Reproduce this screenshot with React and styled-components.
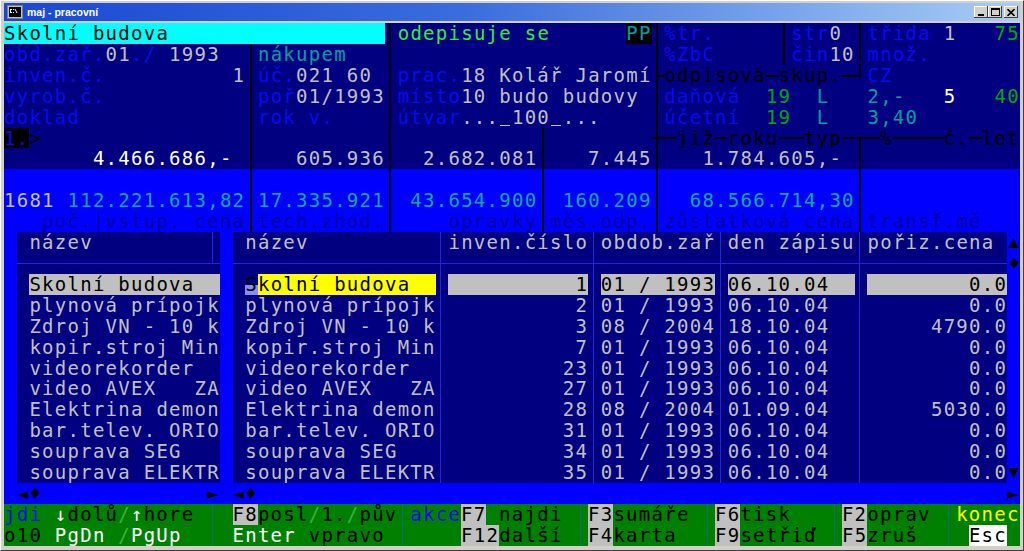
import React from 'react';
import styled, { createGlobalStyle } from 'styled-components';

const CW = 12.7;
const RH = 20.92;

const NV = '#000080';
const BB = '#0000FF';
const LB = '#0A0AF0';
const GY = '#C0C0C0';
const WH = '#FFFFFF';
const BK = '#000000';
const TL = '#00A0A0';
const TL2 = '#10A898';
const GN = '#00A800';
const BGN = '#33EE33';
const YL = '#FFFF00';
const CY = '#00FFFF';
const DL = '#0000A0';
const SEP = '#2424E0';
const BAR = '#008000';
const DIM = '#3FB03F';
const BSEP = '#0A6E82';
const HL = '#C0C0C0';
const CURSOR = `linear-gradient(to bottom, ${NV} 0 54%, #8C8CF0 54% 100%)`;

const GlobalStyle = createGlobalStyle`
  html, body { margin: 0; padding: 0; background: #D4D0C8; overflow: hidden; }
  #root { width: 1024px; height: 551px; }
`;

const Window = styled.div`
  width: 1024px;
  height: 551px;
  box-sizing: border-box;
  background: #D4D0C8;
  border-top: 1px solid #ffffff;
  border-left: 1px solid #ffffff;
  border-right: 1px solid #404040;
  border-bottom: 1px solid #404040;
  padding: 2px 3px 4px 3px;
  display: flex;
  flex-direction: column;
`;

const TitleBar = styled.div`
  height: 18px;
  margin-bottom: 2px;
  display: flex;
  align-items: center;
  gap: 4px;
  padding: 0 2px 0 3px;
  background: linear-gradient(to right, #1848D4 0%, #3A6CDC 45%, #A8CDF5 100%);
`;

const TitleText = styled.span`
  font-family: "Liberation Sans", Arial, sans-serif;
  font-weight: bold;
  font-size: 10.5px;
  color: #ffffff;
  flex: 1;
  white-space: nowrap;
`;

const TitleButtons = styled.div`
  display: flex;
  align-items: center;
`;

const TitleButton = styled.div`
  width: 14px;
  height: 12px;
  margin-left: ${p => (p.$gap ? '2px' : '0')};
  background: #D4D0C8;
  box-shadow: inset -1px -1px #404040, inset 1px 1px #ffffff;
  display: flex;
  align-items: center;
  justify-content: center;
`;

const Console = styled.div`
  width: ${80 * CW}px;
  height: ${25 * RH}px;
  display: grid;
  grid-template-rows: repeat(25, ${RH}px);
  background: ${NV};
  font-family: "DejaVu Sans Mono", "Liberation Mono", monospace;
  font-size: 19px;
  line-height: ${RH}px;
  letter-spacing: ${CW - 19 * 0.60205}px;
  overflow: hidden;
`;

const Row = styled.div`
  display: flex;
  height: ${RH}px;
  background: ${p => p.$bg};
`;

const Cell = styled.span`
  flex: none;
  display: block;
  width: ${p => p.$n * CW}px;
  height: 100%;
  white-space: pre;
  overflow: visible;
  color: ${p => p.$fg || 'inherit'};
  background: ${p => p.$bg || 'transparent'};
`;

const IconCell = styled.span`
  flex: none;
  display: flex;
  align-items: center;
  justify-content: center;
  width: ${CW}px;
  height: 100%;
  background: ${p => p.$bg || 'transparent'};
`;

const UnderCell = styled.span`
  flex: none;
  display: block;
  width: ${CW}px;
  height: 100%;
  background: linear-gradient(to bottom, transparent 84%, ${p => p.$fg} 84%, ${p => p.$fg} 90%, transparent 90%) 1px 0 / 10px 100% no-repeat;
`;

const BoxCell = styled.span`
  flex: none;
  display: block;
  width: ${p => p.$n * CW}px;
  height: 100%;
  background: ${p => p.$lines}, ${p => p.$bg || 'transparent'};
`;

const boxMap = { v: 'ud', h: 'lr', '├': 'udr', '┼': 'udlr', '┬': 'lrd', '┘': 'ul', '┴': 'ulr' };

const boxLayers = (kind, color, w) => {
  const h = w / 2;
  const V = `linear-gradient(to right, transparent calc(50% - ${1 + h}px), ${color} calc(50% - ${1 + h}px), ${color} calc(50% + ${h - 1}px), transparent calc(50% + ${h - 1}px))`;
  const H = `linear-gradient(to bottom, transparent calc(50% - ${h}px), ${color} calc(50% - ${h}px), ${color} calc(50% + ${h}px), transparent calc(50% + ${h}px))`;
  const f = boxMap[kind];
  const L = [];
  const u = f.includes('u');
  const d = f.includes('d');
  const l = f.includes('l');
  const r = f.includes('r');
  if (u && d) L.push(`${V} 0 0 / 100% 100% no-repeat`);
  else if (u) L.push(`${V} 0 0 / 100% calc(50% + ${h}px) no-repeat`);
  else if (d) L.push(`${V} 0 100% / 100% calc(50% + ${h}px) no-repeat`);
  if (l && r) L.push(`${H} 0 0 / 100% 100% no-repeat`);
  else if (l) L.push(`${H} 0 0 / calc(50% - 1px + ${h}px) 100% no-repeat`);
  else if (r) L.push(`${H} 100% 0 / calc(50% + 1px + ${h}px) 100% no-repeat`);
  return L.join(', ');
};

const sp = n => ' '.repeat(n);
const len = t => [...t].length;
const padR = (t, n) => t + sp(n - len(t));
const padL = (t, n) => sp(n - len(t)) + t;

const s = (t, c, b) => ({ t, c, b });
const ic = (icon, b) => ({ icon, b });
const u = c => ({ under: true, c });
const bx = (k, c, b, n = 1, w = 2) => ({ box: k, c, b, n, w });
const r = (bg, ...segs) => ({ bg, segs });

const UpArrow = () => (
  <svg width="11" height="12" viewBox="0 0 11 12">
    <path d="M5.5 1 L10.5 11 L0.5 11 Z" fill="#000" />
  </svg>
);

const DownArrow = () => (
  <svg width="11" height="13" viewBox="0 0 11 13">
    <path d="M0.5 2 L10.5 2 L5.5 12 Z" fill="#000" />
  </svg>
);

const Diamond = () => (
  <svg width="10" height="12" viewBox="0 0 10 12">
    <path d="M5 0.5 L9.5 6 L5 11.5 L0.5 6 Z" fill="#000" />
  </svg>
);

const items = [
  ['Skolní budova', '1', '01 / 1993', '06.10.04', '0.0'],
  ['plynová prípojk', '2', '01 / 1993', '06.10.04', '0.0'],
  ['Zdroj VN - 10 k', '3', '08 / 2004', '18.10.04', '4790.0'],
  ['kopir.stroj Min', '7', '01 / 1993', '06.10.04', '0.0'],
  ['videorekorder', '23', '01 / 1993', '06.10.04', '0.0'],
  ['video AVEX   ZA', '27', '01 / 1993', '06.10.04', '0.0'],
  ['Elektrina demon', '28', '08 / 2004', '01.09.04', '5030.0'],
  ['bar.telev. ORIO', '31', '01 / 1993', '06.10.04', '0.0'],
  ['souprava SEG', '34', '01 / 1993', '06.10.04', '0.0'],
  ['souprava ELEKTR', '35', '01 / 1993', '06.10.04', '0.0'],
];

const itemRow = ([name, inv, date, zap, cena], i) => {
  const sel = i === 0;
  const fg = sel ? BK : GY;
  const hb = sel ? HL : undefined;
  const first = [...name][0];
  const rest = [...name].slice(1).join('');
  return r(
    NV,
    s(' ', null, BB),
    s(' '),
    s(padR(name, 15), fg, hb),
    s(' ', null, BB),
    s(' '),
    sel ? s(first, BK, CURSOR) : s(first, GY),
    sel ? s(padR(rest, 14), BK, YL) : s(padR(rest, 14), GY),
    bx('v', SEP, null, 1, 1),
    s(padL(inv, 11), fg, hb),
    bx('v', SEP, null, 1, 1),
    s(date, fg, hb),
    bx('v', SEP, null, 1, 1),
    s(padR(zap, 10), fg, hb),
    bx('v', SEP, null, 1, 1),
    s(padL(cena, 11), fg, hb),
    i === 9 ? ic(DownArrow, BB) : s(' ', null, BB)
  );
};

const screen = [
  r(NV,
    s(padR('Skolní budova', 30), BK, CY), bx('v', BK),
    s(padR('odepisuje se', 18), BGN), s('PP', TL, BK), bx('v', BK),
    s(padR('%tr.', 9), LB), bx('v', BK), s('str', LB), s('0 ', GY), bx('v', BK),
    s('třida', LB), s(' '), s('1', GY), s('   '), s('75', GN)),
  r(NV,
    s('obd.zař.', LB), s('01', GY), s('./', LB), s(' 1993', GY), s('  '), bx('v', BK),
    s(padR('nákupem', 10), TL), bx('v', BK), s(sp(20)), bx('v', BK),
    s(padR('%ZbC', 9), LB), bx('v', BK), s('čin', LB), s('10', GY), bx('v', BK),
    s(padR('množ.', 12), LB)),
  r(NV,
    s('inven.č.', LB), s(padL('1', 11), GY), bx('v', BK),
    s('úč.', LB), s(padR('021 60', 7), GY), bx('v', BK),
    s('prac.', LB), s('18 Kolář Jaromí', GY), bx('├', BK),
    s('odpisová', BK), bx('h', BK), s('skup.', BK), bx('h', BK), bx('┘', BK),
    s(padR('CZ', 12), LB)),
  r(NV,
    s('vyrob.č.', LB), s(sp(11)), bx('v', BK),
    s('poř', LB), s('01/1993', GY), bx('v', BK),
    s('místo', LB), s(padR('10 budo budovy', 15), GY), bx('v', BK),
    s(padR('daňová', 8), LB), s('19', GN), s('  '), s('L', TL), s('   '),
    s('2,-', TL), s('   '), s('5', WH), s('   '), s('40', GN)),
  r(NV,
    s('doklad', LB), s(sp(13)), bx('v', BK),
    s(padR('rok v.', 10), LB), bx('v', BK),
    s('útvar', LB), s('...', GY), u(GY), s('100', GY), u(GY), s('...', GY), s(sp(4)), bx('v', BK),
    s(padR('účetní', 8), LB), s('19', GN), s('  '), s('L', TL), s('   '),
    s(padR('3,40', 12), TL)),
  r(NV,
    s('1.', LB, BK), s('>', BK), s(sp(16)), bx('v', BK), s(sp(10)), bx('v', BK),
    s(sp(11)), bx('v', BK), s(sp(8)), bx('┼', BK), bx('h', BK),
    s('již', BK), bx('h', BK), s('roku', BK), bx('h', BK, null, 2), s('typ', BK),
    bx('h', BK), bx('┬', BK), bx('h', BK), s('%', BK), bx('h', BK, null, 4),
    s('č.', BK), bx('h', BK), s('let', BK)),
  r(NV,
    s(sp(7)), s('4.466.686,-', WH), s(' '), bx('v', BK),
    s(padL('605.936', 10), GY), bx('v', BK),
    s(padL('2.682.081', 11), GY), bx('v', BK),
    s(padL('7.445', 8), GY), bx('v', BK),
    s(padR(padL('1.784.605,-', 14), 15), GY), bx('v', BK), s(sp(12))),
  r(BB,
    s(sp(19)), bx('v', BK), s(sp(10)), bx('v', BK), s(sp(11)), bx('v', BK),
    s(sp(8)), bx('v', BK), s(sp(15)), bx('v', BK), s(sp(12))),
  r(BB,
    s('1681', GY), s(' '), s('112.221.613,82', TL2), bx('v', BK),
    s('17.335.921', TL2), bx('v', BK),
    s(padL('43.654.900', 11), TL2), bx('v', BK),
    s(padL('160.209', 8), TL2), bx('v', BK),
    s(padR(padL('68.566.714,30', 15), 15), TL2), bx('v', BK), s(sp(12))),
  r(BB,
    s('   poč.', DL), s('|vstup. cena', DL), bx('v', BK),
    s('tech.zhod.', DL), bx('v', BK),
    s(padL('opravky', 11), DL), bx('v', BK),
    s('měs.odp.', DL), bx('v', BK),
    s('zůstatková cena', DL), bx('v', BK),
    s(padR('transf.mě', 12), DL)),
  r(NV,
    s(' ', null, BB), s(padR(' název', 15), GY), bx('v', SEP, null, 1, 1),
    s(' ', null, BB), s(padR(' název', 16), GY), bx('v', SEP, null, 1, 1),
    s('inven.číslo', GY), bx('v', SEP, null, 1, 1),
    s('obdob.zař', GY), bx('v', SEP, null, 1, 1),
    s('den zápisu', GY), bx('v', SEP, null, 1, 1),
    s('pořiz.cena', GY), s(' '), ic(UpArrow, BB)),
  r(NV,
    s(' ', null, BB), bx('h', SEP, null, 15, 1), bx('┴', SEP, null, 1, 1),
    s(' ', null, BB), bx('h', SEP, null, 16, 1), bx('┼', SEP, null, 1, 1),
    bx('h', SEP, null, 11, 1), bx('┼', SEP, null, 1, 1),
    bx('h', SEP, null, 9, 1), bx('┼', SEP, null, 1, 1),
    bx('h', SEP, null, 10, 1), bx('┼', SEP, null, 1, 1),
    bx('h', SEP, null, 11, 1), ic(Diamond, BB)),
  ...items.map(itemRow),
  r(BB,
    s(' '), s('◄♦', BK), s(sp(13)), s('►', BK), s(' '), s('◄♦', BK), s(sp(59)), s('►', BK)),
  r(BAR,
    s('jdi', LB), s(' '), s('↓', WH), s('dolů', BK), s('/', DIM), s('↑', WH), s('hore', BK),
    s(' '), bx('v', BSEP, null, 1, 1), s(' '),
    s('F8', BK, HL), s('posl', BK), s('/', DIM), s('1.', BK), s('/', DIM), s('pův', BK),
    bx('v', BSEP, null, 1, 1), s('akce', LB),
    s('F7', BK, HL), s(' najdi', BK), s(' '), bx('v', BSEP, null, 1, 1),
    s('F3', BK, HL), s('sumáře', BK), s(' '), bx('v', BSEP, null, 1, 1),
    s('F6', BK, HL), s('tisk', BK), s('   '), bx('v', BSEP, null, 1, 1),
    s('F2', BK, HL), s('oprav', BK), s(' '), bx('v', BSEP, null, 1, 1),
    s('konec', YL)),
  r(BAR,
    s('o10', BK), s(' '), s('PgDn', WH), s(' '), s('/', DIM), s('PgUp', WH), s('  '),
    bx('v', BSEP, null, 1, 1), s(' '),
    s('Enter', WH), s(' '), s('vpravo', BK), s(' '), bx('v', BSEP, null, 1, 1),
    s('    '), s('F12', BK, HL), s('další', BK), s(' '), bx('v', BSEP, null, 1, 1),
    s('F4', BK, HL), s('karta', BK), s('  '), bx('v', BSEP, null, 1, 1),
    s('F9', BK, HL), s('setřiď', BK), s(' '), bx('v', BSEP, null, 1, 1),
    s('F5', BK, HL), s('zruš', BK), s('  '), bx('v', BSEP, null, 1, 1),
    s(' '), s('Esc', BK, WH), s(' ')),
];

const ConsoleIcon = () => (
  <svg width="16" height="14" viewBox="0 0 16 14">
    <rect x="0.5" y="0.5" width="15" height="13" fill="#C0C0C0" stroke="#808080" />
    <rect x="2" y="2" width="12" height="10" fill="#000000" />
    <rect x="3" y="4" width="2" height="1" fill="#ffffff" />
    <rect x="3" y="5" width="1" height="2" fill="#ffffff" />
    <rect x="3" y="7" width="2" height="1" fill="#ffffff" />
    <rect x="6" y="4" width="1" height="1" fill="#ffffff" />
    <rect x="6" y="7" width="1" height="1" fill="#ffffff" />
    <path d="M8 4 L10 8" stroke="#ffffff" strokeWidth="1" />
  </svg>
);

const MinIcon = () => (
  <svg width="8" height="7" viewBox="0 0 8 7">
    <rect x="1" y="5" width="6" height="2" fill="#000" />
  </svg>
);

const MaxIcon = () => (
  <svg width="9" height="8" viewBox="0 0 9 8">
    <rect x="0.5" y="0.5" width="8" height="7" fill="none" stroke="#000" />
    <rect x="0" y="0" width="9" height="2" fill="#000" />
  </svg>
);

const CloseIcon = () => (
  <svg width="8" height="7" viewBox="0 0 8 7">
    <path d="M0.5 0 L7.5 7 M7.5 0 L0.5 7" stroke="#000" strokeWidth="1.6" />
  </svg>
);

const renderSeg = (sg, j) => {
  if (sg.box) return <BoxCell key={j} $n={sg.n} $bg={sg.b} $lines={boxLayers(sg.box, sg.c, sg.w)} />;
  if (sg.under) return <UnderCell key={j} $fg={sg.c} />;
  if (sg.icon) {
    const Icon = sg.icon;
    return <IconCell key={j} $bg={sg.b}><Icon /></IconCell>;
  }
  return <Cell key={j} $n={len(sg.t)} $fg={sg.c} $bg={sg.b}>{sg.t}</Cell>;
};

export default function App() {
  return (
    <>
      <GlobalStyle />
      <Window>
        <TitleBar>
          <ConsoleIcon />
          <TitleText>maj - pracovní</TitleText>
          <TitleButtons>
            <TitleButton><MinIcon /></TitleButton>
            <TitleButton><MaxIcon /></TitleButton>
            <TitleButton $gap><CloseIcon /></TitleButton>
          </TitleButtons>
        </TitleBar>
        <Console>
          {screen.map((row, i) => (
            <Row key={i} $bg={row.bg}>
              {row.segs.map(renderSeg)}
            </Row>
          ))}
        </Console>
      </Window>
    </>
  );
}
